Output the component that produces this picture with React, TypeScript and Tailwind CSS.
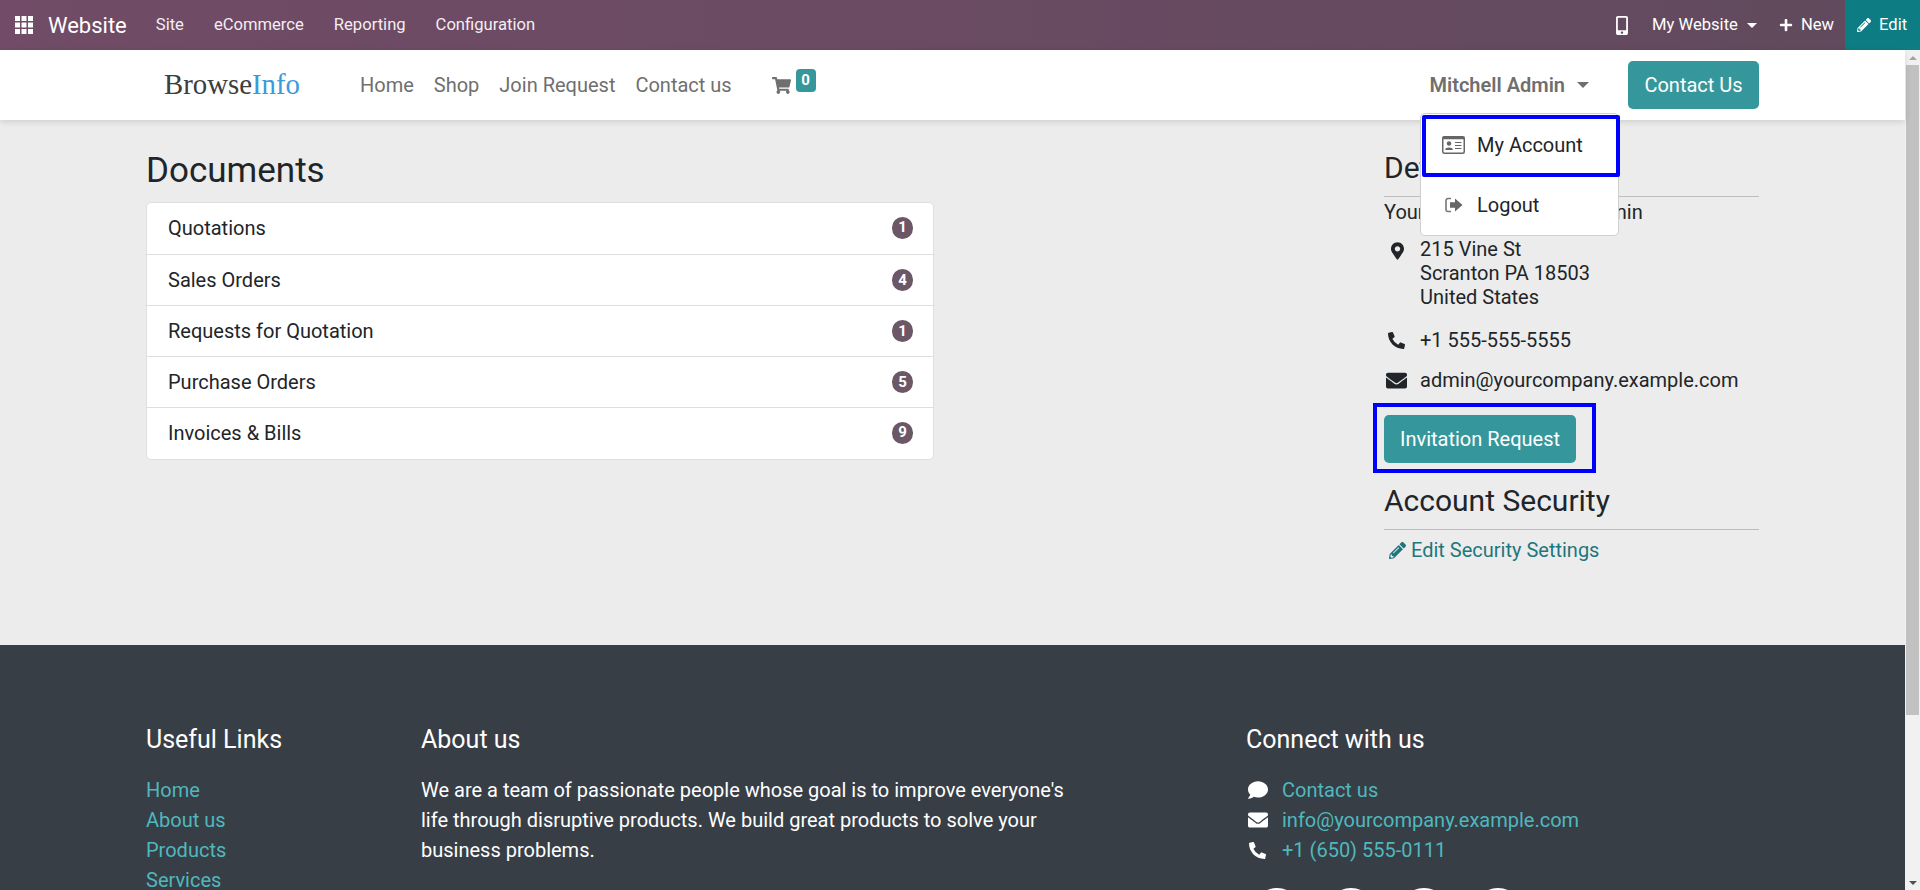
import { FaShoppingCart, FaMobileAlt, FaPlus, FaPencilAlt, FaMapMarkerAlt, FaPhoneAlt, FaEnvelope, FaComment } from "react-icons/fa";

const docs: [string, number][] = [
  ["Quotations", 1],
  ["Sales Orders", 4],
  ["Requests for Quotation", 1],
  ["Purchase Orders", 5],
  ["Invoices & Bills", 9],
];

function GridIcon() {
  const p = [0, 6.5, 13];
  return (
    <svg width="18" height="18" viewBox="0 0 18 18" fill="#fff" className="ml-[15px] shrink-0">
      {p.map((y) => p.map((x) => <rect key={`${x}-${y}`} x={x} y={y} width="5" height="5" />))}
    </svg>
  );
}

function CardIcon() {
  return (
    <svg width="23" height="18" viewBox="0 0 23 18" className="shrink-0">
      <rect x="0.75" y="0.75" width="21.5" height="16.5" rx="1.5" fill="#fff" stroke="#666" strokeWidth="1.5" />
      <rect x="0.75" y="0.75" width="21.5" height="2.5" fill="#666" />
      <circle cx="7" cy="7.5" r="2.2" fill="#666" />
      <path d="M3.2 14 C3.2 10.8 10.8 10.8 10.8 14 Z" fill="#666" />
      <path d="M13 6.5h6.5M13 9.5h6.5M13 12.5h6.5" stroke="#666" strokeWidth="1" />
    </svg>
  );
}

function LogoutIcon() {
  return (
    <svg width="18" height="16" viewBox="0 0 18 16" className="shrink-0">
      <path d="M6 1.5H3A2 2 0 0 0 1 3.5v9a2 2 0 0 0 2 2h3" fill="none" stroke="#777" strokeWidth="1.6" />
      <path d="M5 5.2h5V1.5L17.5 8 10 14.5v-3.7H5z" fill="#666" />
    </svg>
  );
}

function Caret({ s }: { s: "lg" | "sm" }) {
  return s === "lg" ? (
    <div className="w-0 h-0 border-l-[6px] border-r-[6px] border-t-[6px] border-l-transparent border-r-transparent border-t-[#6f6f6f]"></div>
  ) : (
    <div className="w-0 h-0 border-l-[5px] border-r-[5px] border-t-[5px] border-l-transparent border-r-transparent border-t-white"></div>
  );
}

function TopBar() {
  return (
    <div className="h-[50px] shrink-0 flex items-center text-white bg-gradient-to-r from-[#714b67] to-[#614a5d]">
      <GridIcon />
      <span className="ml-[15px] text-[22px]">Website</span>
      <div className="ml-[29px] flex gap-[30px] text-[16.6px] text-[#f3eef2]">
        <span>Site</span>
        <span>eCommerce</span>
        <span>Reporting</span>
        <span>Configuration</span>
      </div>
      <div className="ml-auto flex items-center text-[16.6px] h-full">
        <FaMobileAlt className="w-[12px] h-[19px]" />
        <span className="ml-[24px]">My Website</span>
        <div className="ml-[9px]"><Caret s="sm" /></div>
        <FaPlus className="ml-[22px] w-[14px] h-[14px]" />
        <span className="ml-[8px]">New</span>
        <div className="ml-[11px] w-[75px] h-full bg-[#0e7c83] flex items-center pl-[12px] gap-[8px]">
          <FaPencilAlt className="w-[14px] h-[14px]" />
          <span>Edit</span>
        </div>
      </div>
    </div>
  );
}

function Header() {
  return (
    <div className="relative z-10 h-[70px] shrink-0 bg-white shadow-[0_2px_6px_rgba(0,0,0,0.12)] flex items-center text-[20px] text-[#6f6f6f]">
      <span className="ml-[164px] text-[28.8px] font-['Liberation_Serif',serif] text-[#3d3d3d]">
        Browse<span className="text-[#3a9bd9]">Info</span>
      </span>
      <div className="ml-[60px] flex gap-[20px]">
        <span>Home</span>
        <span>Shop</span>
        <span>Join Request</span>
        <span>Contact us</span>
      </div>
      <div className="relative ml-[40px] w-[46px] h-[24px]">
        <FaShoppingCart className="absolute left-0 top-[3px] w-[19px] h-[19px]" />
        <span className="absolute left-[24px] top-[-4px] w-[20px] h-[23px] rounded-[4px] bg-[#35979c] text-white text-[15px] font-bold flex items-center justify-center">0</span>
      </div>
      <div className="ml-auto flex items-center">
        <span className="font-semibold">Mitchell Admin</span>
        <div className="ml-[12px]"><Caret s="lg" /></div>
        <button className="ml-[39px] mr-[146px] w-[131px] h-[48px] rounded-[5px] bg-[#35979c] text-white text-[20px]">Contact Us</button>
      </div>
      <div className="absolute left-[1420px] top-[63px] w-[199px] h-[123px] bg-white border border-[#cfcfcf] rounded-[5px] text-[20px] text-[#212529]">
        <div className="mt-[1px] ml-[1px] w-[198px] h-[62px] flex items-center pl-[16px] pb-[2px] border-[4px] border-[#0000ff] rounded-[2px]">
          <CardIcon />
          <span className="ml-[12px]">My Account</span>
        </div>
        <div className="h-[57px] flex items-center pl-[24px] pb-[1px]">
          <LogoutIcon />
          <span className="ml-[14px]">Logout</span>
        </div>
      </div>
    </div>
  );
}

function Main() {
  return (
    <div className="h-[525px] shrink-0 bg-[#ececec] flex justify-between pl-[146px] pr-[146px] text-[20px] text-[#212529]">
      <div className="w-[788px]">
        <h1 className="mt-[30px] h-[52px] text-[35px] leading-[42px]">Documents</h1>
        <div className="bg-white rounded-[5px] border border-[#dfdfdf]">
          {docs.map(([name, n], i) => (
            <div key={name} className={`${i === 4 ? "h-[52px] pb-[2px]" : i === 0 ? "h-[51px] pb-[2px]" : "h-[51px]"} flex items-center justify-between pl-[21px] pr-[20px] ${i > 0 ? "border-t border-[#dfdfdf]" : ""}`}>
              <span>{name}</span>
              <span className="w-[21px] h-[22px] rounded-full bg-[#6b5766] text-white text-[15px] font-bold flex items-center justify-center">{n}</span>
            </div>
          ))}
        </div>
      </div>
      <div className="w-[375px]">
        <h2 className="mt-[29px] h-[48px] text-[30px] leading-[38px] border-b border-[#bdbdbd]">Details</h2>
        <div className="mt-[3px] leading-[24px]">Your Contact: Mitchell Admin</div>
        <div className="mt-[13px] flex">
          <div className="w-[36px] pt-[5px] pl-[7px]"><FaMapMarkerAlt className="w-[13px] h-[18px]" /></div>
          <div className="leading-[24px]">215 Vine St<br />Scranton PA 18503<br />United States</div>
        </div>
        <div className="mt-[19px] flex items-center h-[24px]">
          <div className="w-[36px] pl-[4px]"><FaPhoneAlt className="w-[17px] h-[17px]" /></div>
          <div>+1 555-555-5555</div>
        </div>
        <div className="mt-[16px] flex items-center h-[24px]">
          <div className="w-[36px] pl-[2px]"><FaEnvelope className="w-[21px] h-[21px]" /></div>
          <div>admin@yourcompany.example.com</div>
        </div>
        <div className="relative mt-[23px] w-[192px] h-[48px]">
          <button className="w-full h-full rounded-[5px] bg-[#35979c] text-white text-[20px]">Invitation Request</button>
          <div className="absolute left-[-11px] top-[-12px] w-[223px] h-[70px] border-[4px] border-[#0000ff]"></div>
        </div>
        <h2 className="mt-[18px] h-[49px] text-[30px] leading-[40px] border-b border-[#bdbdbd]">Account Security</h2>
        <div className="mt-[7px] flex items-center text-[#1e777d] leading-[27px]">
          <FaPencilAlt className="ml-[5px] w-[17px] h-[17px]" />
          <span className="ml-[5px]">Edit Security Settings</span>
        </div>
      </div>
    </div>
  );
}

function Footer() {
  return (
    <div className="flex-1 bg-[#383e46] pl-[146px] text-[20px] text-white flex overflow-hidden">
      <div className="w-[275px] pt-[78px]">
        <h5 className="text-[25px] leading-[34px]">Useful Links</h5>
        <div className="mt-[18px] leading-[30px] text-[#4fb8bd]">
          <div>Home</div><div>About us</div><div>Products</div><div>Services</div>
        </div>
      </div>
      <div className="w-[825px] pt-[78px]">
        <h5 className="text-[25px] leading-[34px]">About us</h5>
        <p className="mt-[18px] leading-[30px] w-[660px]">We are a team of passionate people whose goal is to improve everyone's life through disruptive products. We build great products to solve your business problems.</p>
      </div>
      <div className="pt-[78px]">
        <h5 className="text-[25px] leading-[34px]">Connect with us</h5>
        <div className="mt-[18px] leading-[30px] text-[#4fb8bd]">
          <div className="flex items-center"><FaComment className="ml-[2px] w-[20px] h-[20px] text-white" /><span className="ml-[14px]">Contact us</span></div>
          <div className="flex items-center"><FaEnvelope className="ml-[2px] w-[20px] h-[20px] text-white" /><span className="ml-[14px]">info@yourcompany.example.com</span></div>
          <div className="flex items-center"><FaPhoneAlt className="ml-[3px] w-[17px] h-[17px] text-white" /><span className="ml-[16px]">+1 (650) 555-0111</span></div>
        </div>
        <div className="mt-[23px] ml-[7px] flex gap-[25.6px]">
          {[0, 1, 2, 3].map((i) => (
            <div key={i} className="w-[48px] h-[48px] shrink-0 rounded-full border-2 border-white"></div>
          ))}
        </div>
      </div>
    </div>
  );
}

function Scrollbar() {
  return (
    <div className="w-[15px] shrink-0 bg-[#f1f1f1] flex flex-col items-center">
      <div className="h-[15px] w-full flex items-center justify-center">
        <div className="w-0 h-0 border-l-[4px] border-r-[4px] border-b-[4px] border-l-transparent border-r-transparent border-b-[#a3a3a3]"></div>
      </div>
      <div className="h-[650px] w-full px-[1px]"><div className="h-full bg-[#c1c1c1]"></div></div>
      <div className="flex-1"></div>
      <div className="h-[15px] w-full flex items-center justify-center">
        <div className="w-0 h-0 border-l-[4px] border-r-[4px] border-t-[4px] border-l-transparent border-r-transparent border-t-[#505050]"></div>
      </div>
    </div>
  );
}

export default function App() {
  return (
    <div className="h-[890px] overflow-hidden flex flex-col font-['Roboto',sans-serif]">
      <TopBar />
      <div className="flex-1 flex min-h-0">
        <div className="flex-1 min-w-0 flex flex-col">
          <Header />
          <Main />
          <Footer />
        </div>
        <Scrollbar />
      </div>
    </div>
  );
}
